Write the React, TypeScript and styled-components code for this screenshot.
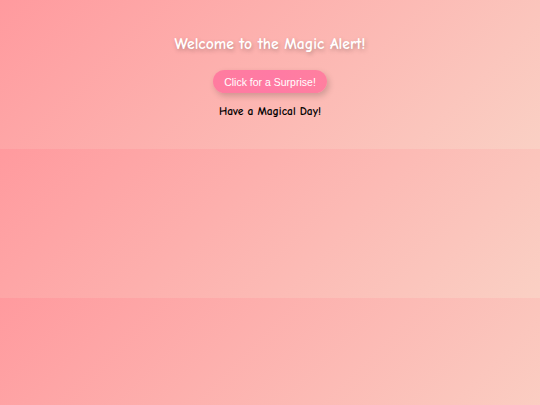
import React, { useState } from 'react'
import styled, { createGlobalStyle } from 'styled-components'

const GlobalStyle = createGlobalStyle`
  html {
    background: linear-gradient(135deg, #ff9a9e 0%, #fad0c4 100%);
  }
  body {
    margin: 0;
    font-family: 'Comic Sans MS', 'Comic Neue', cursive;
  }
`

const Page = styled.div`
  display: flex;
  flex-direction: column;
  align-items: center;
  padding: 31px 0 29px;
  text-align: center;
`

const Title = styled.h1`
  margin: 0;
  font-size: 15.6px;
  line-height: 26px;
  font-weight: bold;
  color: #ffffff;
  text-shadow: 1px 2px 4px rgba(0, 0, 0, 0.25);
`

const SurpriseButton = styled.button`
  margin-top: 13px;
  height: 23px;
  padding: 0 11px;
  border: none;
  border-radius: 12px;
  background: linear-gradient(90deg, #ff7c9f 0%, #ff7aa4 50%, #ff7f9f 100%);
  color: #ffffff;
  font-family: 'Liberation Sans', Arial, sans-serif;
  font-size: 10.5px;
  box-shadow: 2px 3px 6px rgba(0, 0, 0, 0.18);
  cursor: pointer;
`

const Message = styled.p`
  margin: 11px 0 0;
  font-size: 11.5px;
  line-height: 16px;
  font-weight: bold;
  color: #000000;
`

export default function App() {
  const [clicks, setClicks] = useState(0)

  return (
    <>
      <GlobalStyle />
      <Page>
        <Title>Welcome to the Magic Alert!</Title>
        <SurpriseButton onClick={() => setClicks(clicks + 1)}>Click for a Surprise!</SurpriseButton>
        <Message>Have a Magical Day!</Message>
      </Page>
    </>
  )
}
